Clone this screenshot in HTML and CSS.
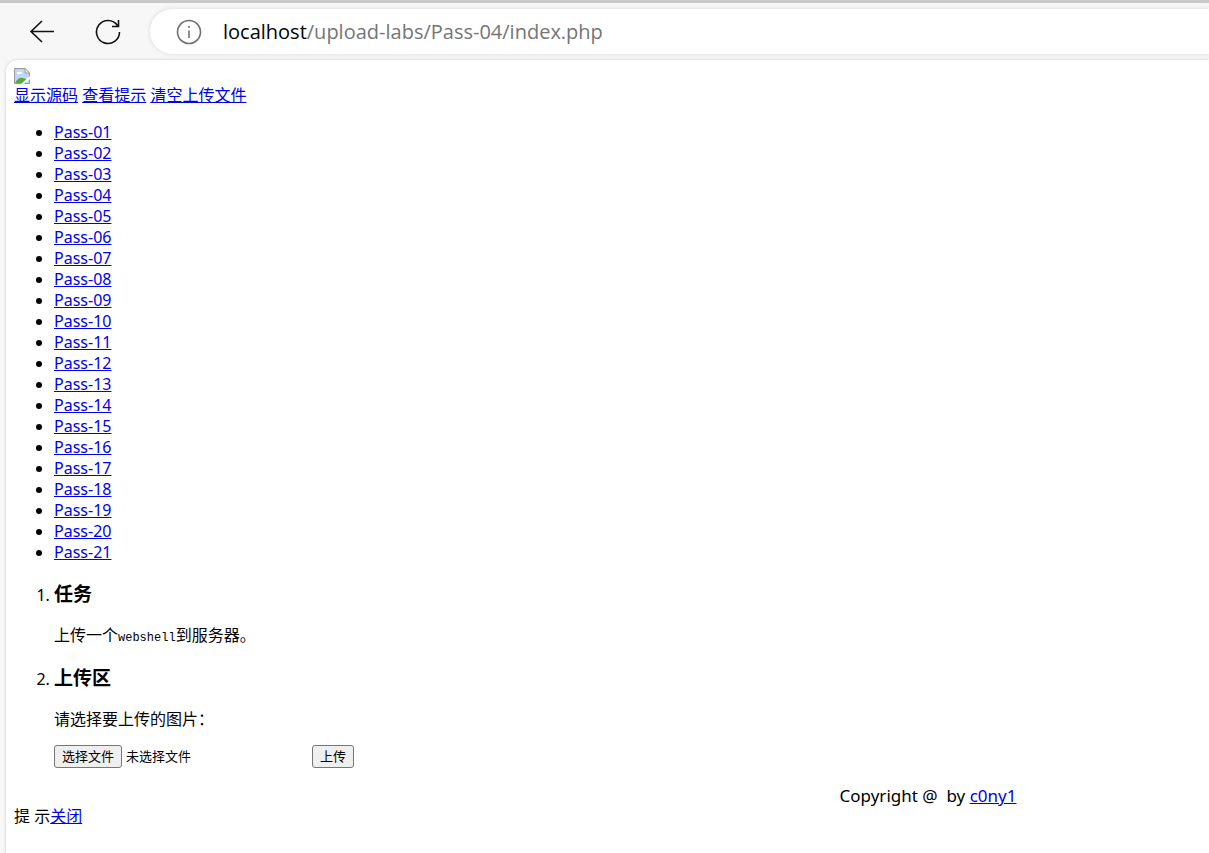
FILE: index.html
```html
<!DOCTYPE html>
<html lang="zh-CN">
<head>
    <meta charset="UTF-8">
    <meta name="viewport" content="width=device-width, initial-scale=1.0">
    <title>upload-labs</title>
    <link rel="stylesheet" href="styles.css">
</head>
<body>

    <header class="toolbar">
        <button class="nav-btn" type="button" aria-label="返回">
            <svg width="26" height="26" viewBox="0 0 26 26"><path d="M25 12.500H2M13 2L2 12.500L13 23"/></svg>
        </button>
        <button class="nav-btn" type="button" aria-label="刷新">
            <svg width="26" height="26" viewBox="0 0 26 26"><path d="M24.500 13A11.500 11.500 0 1 1 22.500 6.500M23.500 1V7.500H17"/></svg>
        </button>
        <div class="address">
            <svg class="info" width="26" height="26" viewBox="0 0 26 26"><circle cx="13" cy="13" r="11.500"/><path d="M13 11.500V19M13 7V9"/></svg>
            <span class="url"><span class="host">localhost</span>/upload-labs/Pass-04/index.php</span>
        </div>
    </header>

    <main class="page">
        <div class="logo">
            <svg width="16" height="16" viewBox="0 0 16 16">
                <path d="M.5.500H11L15.500 5V15.500H.5Z" fill="#c3d7f5" stroke="#999"/>
                <path d="M3 6a1.500 1.500 0 0 1 2-2 2 2 0 0 1 3 2Z" fill="#fff"/>
                <path d="M1 15C3 11 6 9 9 10L12 11V15Z" fill="#55aa3c"/>
                <path d="M11 .500V5h4.500Z" fill="#fff" stroke="#999"/>
                <path d="M7 16L16 8V11L10 16Z" fill="#fff"/>
            </svg>
        </div>
        <div class="actions">
            <a href="#">显示源码</a>
            <a href="#">查看提示</a>
            <a href="#">清空上传文件</a>
        </div>

        <ul class="menu">
            <li><a href="#">Pass-01</a></li>
            <li><a href="#">Pass-02</a></li>
            <li><a href="#">Pass-03</a></li>
            <li><a href="#">Pass-04</a></li>
            <li><a href="#">Pass-05</a></li>
            <li><a href="#">Pass-06</a></li>
            <li><a href="#">Pass-07</a></li>
            <li><a href="#">Pass-08</a></li>
            <li><a href="#">Pass-09</a></li>
            <li><a href="#">Pass-10</a></li>
            <li><a href="#">Pass-11</a></li>
            <li><a href="#">Pass-12</a></li>
            <li><a href="#">Pass-13</a></li>
            <li><a href="#">Pass-14</a></li>
            <li><a href="#">Pass-15</a></li>
            <li><a href="#">Pass-16</a></li>
            <li><a href="#">Pass-17</a></li>
            <li><a href="#">Pass-18</a></li>
            <li><a href="#">Pass-19</a></li>
            <li><a href="#">Pass-20</a></li>
            <li><a href="#">Pass-21</a></li>
        </ul>

        <ol class="tasks">
            <li>
                <h3>任务</h3>
                <p>上传一个<code>webshell</code>到服务器。</p>
            </li>
            <li>
                <h3>上传区</h3>
                <form class="upload">
                    <p><label for="file">请选择要上传的图片：</label></p>
                    <div class="row">
                        <div class="picker">
                            <input type="file" id="file" hidden>
                            <button type="button" onclick="document.getElementById('file').click()">选择文件</button>
                            <span>未选择文件</span>
                        </div>
                        <button type="submit">上传</button>
                    </div>
                </form>
            </li>
        </ol>

        <footer class="footer">Copyright @&nbsp; by <a href="#">c0ny1</a></footer>
        <div class="hint">提 示<a href="#">关闭</a></div>
    </main>

</body>
</html>
```
FILE: styles.css
```css
* {
    box-sizing: border-box;
}

body {
    margin: 0;
    min-height: 100vh;
    display: flex;
    flex-direction: column;
    background: #f7f7f7;
    border-top: 3px solid #c8c8c8;
    font: 16px/21px "Noto Sans", "Noto Sans CJK SC", sans-serif;
    color: #000;
}

a {
    color: #0000ee;
}

/* Browser bar */
.toolbar {
    display: flex;
    align-items: center;
    padding: 6px 0 6px 29px;
}

.nav-btn {
    display: flex;
    width: 26px;
    margin-right: 40px;
    padding: 0;
    border: none;
    background: none;
}

.nav-btn svg {
    fill: none;
    stroke: #111;
    stroke-width: 1.6;
}

.address {
    flex: 1;
    display: flex;
    align-items: center;
    gap: 21px;
    height: 45px;
    margin-left: -11px;
    padding-left: 26px;
    background: #fff;
    border-radius: 23px 0 0 23px;
    box-shadow: 0 0 5px rgba(0, 0, 0, 0.12);
}

.info {
    fill: none;
    stroke: #707070;
    stroke-width: 1.6;
}

.url {
    font-family: "Open Sans", sans-serif;
    font-size: 20px;
    line-height: 28px;
    color: #757575;
}

.host {
    color: #000;
}

/* Page */
.page {
    flex: 1;
    margin-left: 6px;
    padding: 8px;
    background: #fff;
    border-radius: 12px 0 0 0;
    box-shadow: 0 0 3px rgba(0, 0, 0, 0.2);
}

.logo {
    height: 17px;
}

.logo svg {
    display: block;
}

.menu,
.tasks {
    margin: 16px 0;
    padding-left: 40px;
}

.tasks {
    margin-bottom: 17px;
}

.tasks h3 {
    margin: 19px 0 18px;
    font-size: 19px;
    line-height: 25px;
}

.tasks p {
    margin: 0;
}

.tasks li + li h3 {
    margin-top: 20px;
}

.tasks code {
    font: 12px/16px "Liberation Mono", monospace;
}

.row {
    display: flex;
    margin-top: 15px;
    font-size: 13px;
}

.picker {
    display: flex;
    align-items: center;
    gap: 4px;
    width: 258px;
}

.row button {
    height: 23px;
    padding: 0 7px;
    font: inherit;
    color: #000;
    background: #efefef;
    border: 1px solid #767676;
    border-radius: 3px;
}

.footer {
    margin-left: 54%;
    font-size: 17px;
    text-align: center;
}
```
